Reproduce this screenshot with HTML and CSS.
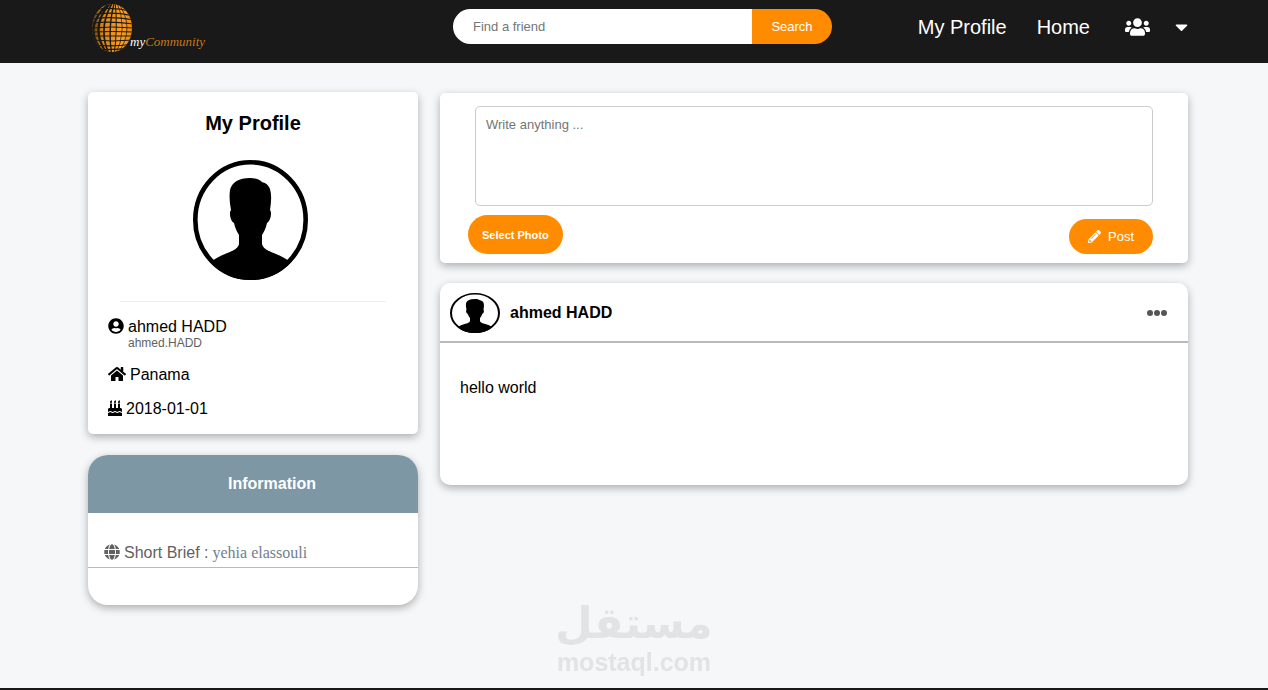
FILE: index.html
```html
<!DOCTYPE html>
<html lang="en">
<head>
    <meta charset="UTF-8">
    <meta name="viewport" content="width=device-width, initial-scale=1.0">
    <title>myCommunity</title>
    <link rel="stylesheet" href="styles.css">
</head>
<body>
    <!-- shared avatar picture -->
    <svg class="sprite" aria-hidden="true">
        <symbol id="avatar" viewBox="0 0 115 120" preserveAspectRatio="none">
            <clipPath id="avatar-clip"><ellipse cx="57.5" cy="60" rx="57" ry="60"/></clipPath>
            <ellipse cx="57.5" cy="60" rx="55.2" ry="57.7" fill="#fff" stroke="#000" stroke-width="4.6"/>
            <path clip-path="url(#avatar-clip)" d="M57 18C46 18 39 22 37 30C36 37 37 44 38 50C36 52 37 61 41 63C42 68 44 72 46 75V84C45 90 36 92 32 94C27 96 23 98 19 101V120H96V101C92 98 88 96 83 94C79 92 70 90 69 84V75C71 72 73 68 74 63C78 61 79 52 77 50C78 43 79 36 77 29C75 24 72 23 69 22C66 19 62 18 57 18Z"/>
        </symbol>
    </svg>

    <header class="navbar">
        <a class="logo" href="#" aria-label="myCommunity">
            <svg class="logo-globe" viewBox="0 0 42 50">
                <defs>
                    <linearGradient id="globe-fill" x1="0" y1="0" x2="1" y2="0">
                        <stop offset="0" stop-color="#5a3a10"/>
                        <stop offset="0.25" stop-color="#d98418"/>
                        <stop offset="0.7" stop-color="#ff9e24"/>
                        <stop offset="1" stop-color="#e8860c"/>
                    </linearGradient>
                    <clipPath id="globe-clip"><ellipse cx="20" cy="25" rx="20" ry="24"/></clipPath>
                </defs>
                <g clip-path="url(#globe-clip)">
                    <rect width="42" height="50" fill="url(#globe-fill)"/>
                    <g fill="none" stroke="#191919">
                        <path stroke-width="2.2" d="M21 -3Q-15 25 15 53M21 -3Q-6 25 17 53"/>
                        <path stroke-width="1.7" d="M22 -3Q4 25 18 53"/>
                        <path stroke-width="1.4" d="M23 -3Q15 25 20 53"/>
                        <path stroke-width="1" d="M23 -3Q26 25 22 53"/>
                        <path stroke-width="0.7" d="M24 -3Q37 25 23 53M24 -3Q46 25 24 53"/>
                        <path stroke-width="1.2" d="M0 7Q20 3 42 9M0 12Q20 8 42 13M0 16Q20 13 42 17M0 20Q20 18 42 21"/>
                        <path stroke-width="1" d="M0 25Q20 23 42 25M0 29Q20 28 42 29M0 33Q20 33 42 33M0 37Q20 39 42 37"/>
                        <path stroke-width="1.2" d="M0 42Q20 44 42 41M0 46Q20 48 42 44"/>
                    </g>
                </g>
            </svg>
            <span class="logo-text">my<span>Community</span></span>
        </a>

        <form class="search">
            <input type="text" placeholder="Find a friend" aria-label="Find a friend">
            <button type="button">Search</button>
        </form>

        <nav class="menu">
            <a href="#">My Profile</a>
            <a href="#">Home</a>
            <button class="icon-button friends" type="button" aria-label="Friends">
                <svg width="25" height="20" viewBox="0 0 640 512"><path d="M96 224c35.3 0 64-28.7 64-64s-28.7-64-64-64-64 28.7-64 64 28.7 64 64 64zm448 0c35.3 0 64-28.7 64-64s-28.7-64-64-64-64 28.7-64 64 28.7 64 64 64zm32 32h-64c-17.6 0-33.5 7.1-45.1 18.6 40.3 22.1 68.9 62 75.1 109.4h66c17.7 0 32-14.3 32-32v-32c0-35.3-28.7-64-64-64zm-256 0c61.9 0 112-50.1 112-112S381.9 32 320 32 208 82.1 208 144s50.1 112 112 112zm76.8 32h-8.3c-20.8 10-43.9 16-68.5 16s-47.6-6-68.5-16h-8.3C179.6 288 128 339.6 128 403.2V432c0 26.5 21.5 48 48 48h288c26.5 0 48-21.5 48-48v-28.8c0-63.6-51.6-115.2-115.2-115.2zm-223.7-13.4C161.5 263.1 145.6 256 128 256H64c-35.3 0-64 28.7-64 64v32c0 17.7 14.3 32 32 32h65.9c6.3-47.4 34.9-87.3 75.2-109.4z"/></svg>
            </button>
            <button class="icon-button" type="button" aria-label="Open menu">
                <svg width="13" height="20" viewBox="0 0 320 512"><path d="M31.3 192h257.3c17.8 0 26.7 21.5 14.1 34.1L174.1 354.8c-7.8 7.8-20.5 7.8-28.3 0L17.2 226.1C4.6 213.5 13.5 192 31.3 192z"/></svg>
            </button>
        </nav>
    </header>

    <main class="page">
        <aside class="sidebar">
            <section class="card profile">
                <h1>My Profile</h1>
                <svg class="profile-photo" role="img" aria-label="ahmed HADD"><use href="#avatar"/></svg>
                <hr>
                <ul class="details">
                    <li>
                        <svg width="16" height="16" viewBox="0 0 496 512"><path d="M248 8C111 8 0 119 0 256s111 248 248 248 248-111 248-248S385 8 248 8zm0 96c48.6 0 88 39.4 88 88s-39.4 88-88 88-88-39.4-88-88 39.4-88 88-88zm0 344c-58.7 0-111.3-26.6-146.5-68.2 18.8-35.4 55.6-59.8 98.5-59.8 2.4 0 4.8.4 7.1 1.1 13 4.2 26.6 6.9 40.9 6.9 14.3 0 28-2.7 40.9-6.9 2.3-.7 4.7-1.1 7.1-1.1 42.9 0 79.7 24.4 98.5 59.8C359.3 421.4 306.7 448 248 448z"/></svg>
                        <div>
                            ahmed HADD
                            <small>ahmed.HADD</small>
                        </div>
                    </li>
                    <li>
                        <svg width="18" height="16" viewBox="0 0 576 512"><path d="M280.37 148.26L96 300.11V464a16 16 0 0 0 16 16l112.06-.29a16 16 0 0 0 15.92-16V368a16 16 0 0 1 16-16h64a16 16 0 0 1 16 16v95.64a16 16 0 0 0 16 16.05L464 480a16 16 0 0 0 16-16V300L295.67 148.26a12.19 12.19 0 0 0-15.3 0zM571.6 251.47L488 182.56V44.05a12 12 0 0 0-12-12h-56a12 12 0 0 0-12 12v72.61L318.47 43a48 48 0 0 0-61 0L4.34 251.47a12 12 0 0 0-1.6 16.9l25.5 31A12 12 0 0 0 45.15 301l235.22-193.74a12.19 12.19 0 0 1 15.3 0L530.9 301a12 12 0 0 0 16.9-1.6l25.5-31a12 12 0 0 0-1.7-16.93z"/></svg>
                        Panama
                    </li>
                    <li>
                        <svg width="14" height="16" viewBox="0 0 448 512"><path d="M448 384c-28.02 0-31.26-32-74.5-32-43.43 0-46.825 32-74.75 32-27.695 0-31.454-32-74.75-32-42.842 0-47.218 32-74.5 32-28.148 0-31.202-32-74.75-32-43.547 0-46.653 32-74.75 32v-80c0-26.5 21.5-48 48-48h16V112h64v144h64V112h64v144h64V112h64v144h16c26.5 0 48 21.5 48 48v80zm0 128H0v-96c43.356 0 46.767-32 74.75-32 27.951 0 31.253 32 74.75 32 42.843 0 47.217-32 74.5-32 28.148 0 31.201 32 74.75 32 43.357 0 46.767-32 74.75-32 27.488 0 31.252 32 74.5 32v96zM96 96c-17.75 0-32-14.25-32-32 0-31 32-23 32-64 12 0 32 29.5 32 56s-14.25 40-32 40zm128 0c-17.75 0-32-14.25-32-32 0-31 32-23 32-64 12 0 32 29.5 32 56s-14.25 40-32 40zm128 0c-17.75 0-32-14.25-32-32 0-31 32-23 32-64 12 0 32 29.5 32 56s-14.25 40-32 40z"/></svg>
                        2018-01-01
                    </li>
                </ul>
            </section>

            <section class="card info">
                <h2>Information</h2>
                <p>
                    <svg width="16" height="16" viewBox="0 0 496 512"><path d="M336.5 160C322 70.7 287.8 8 248 8s-74 62.7-88.5 152h177zM152 256c0 22.2 1.2 43.5 3.3 64h185.3c2.1-20.5 3.3-41.8 3.3-64s-1.2-43.5-3.3-64H155.3c-2.1 20.5-3.3 41.8-3.3 64zm324.7-96c-28.6-67.9-86.5-120.4-158-141.6 24.4 33.8 41.2 84.7 50 141.6h108zM177.2 18.4C105.8 39.6 47.8 92.1 19.3 160h108c8.7-56.9 25.5-107.8 49.9-141.6zM487.4 192H372.7c2.1 21 3.3 42.5 3.3 64s-1.2 43-3.3 64h114.6c5.5-20.5 8.6-41.8 8.6-64s-3.1-43.5-8.5-64zM120 256c0-21.5 1.2-43 3.3-64H8.6C3.2 212.5 0 233.8 0 256s3.2 43.5 8.6 64h114.6c-2-21-3.2-42.5-3.2-64zm39.5 96c14.5 89.3 48.7 152 88.5 152s74-62.7 88.5-152h-177zm159.3 141.6c71.4-21.2 129.4-73.7 158-141.6h-108c-8.8 56.9-25.6 107.8-50 141.6zM19.3 352c28.6 67.9 86.5 120.4 158 141.6-24.4-33.8-41.2-84.7-50-141.6h-108z"/></svg>
                    Short Brief :
                    <span>yehia elassouli</span>
                </p>
            </section>
        </aside>

        <div class="feed">
            <form class="card composer">
                <textarea placeholder="Write anything ..." aria-label="Write anything"></textarea>
                <div class="composer-actions">
                    <button class="select-photo" type="button">Select Photo</button>
                    <button class="send-post" type="button">
                        <svg width="13" height="13" viewBox="0 0 512 512"><path d="M497.9 142.1l-46.1 46.1c-4.7 4.7-12.3 4.7-17 0l-111-111c-4.7-4.7-4.7-12.3 0-17l46.1-46.1c18.7-18.7 49.1-18.7 67.9 0l60.1 60.1c18.8 18.7 18.8 49.1 0 67.9zM284.2 99.8L21.6 362.4.4 483.9c-2.9 16.4 11.4 30.6 27.8 27.8l121.5-21.3 262.6-262.6c4.7-4.7 4.7-12.3 0-17l-111-111c-4.8-4.7-12.4-4.7-17.1 0zM124.1 339.9c-5.5-5.5-5.5-14.3 0-19.8l154-154c5.5-5.5 14.3-5.5 19.8 0s5.5 14.3 0 19.8l-154 154c-5.5 5.5-14.3 5.5-19.8 0zM88 424h48v36.3l-64.5 11.3-31.1-31.1L51.7 376H88v48z"/></svg>
                        Post
                    </button>
                </div>
            </form>

            <article class="card post">
                <header>
                    <svg class="post-photo" role="img" aria-label="ahmed HADD"><use href="#avatar"/></svg>
                    <h3>ahmed HADD</h3>
                    <button class="icon-button more" type="button" aria-label="More">
                        <svg width="20" height="6" viewBox="0 0 20 6"><circle cx="3" cy="3" r="3"/><circle cx="10" cy="3" r="3"/><circle cx="17" cy="3" r="3"/></svg>
                    </button>
                </header>
                <p>hello world</p>
            </article>
        </div>
    </main>

    <div class="watermark">
        <span class="watermark-ar" lang="ar">مستقل</span>
        <span>mostaql.com</span>
    </div>
</body>
</html>
```
FILE: styles.css
```css
* {
    box-sizing: border-box;
}

body {
    margin: 0;
    min-height: 100vh;
    border-bottom: 2px solid #191919;
    background-color: #f5f7f9;
    font-family: "Liberation Sans", Arial, sans-serif;
    font-size: 16px;
    line-height: 18px;
    color: #000;
}

h1, h2, h3, p, ul {
    margin: 0;
    padding: 0;
}

button {
    border: none;
    cursor: pointer;
    font-family: inherit;
}

input, textarea {
    font-family: inherit;
    font-size: 13px;
}

input::placeholder, textarea::placeholder {
    color: #757575;
}

svg {
    flex: none;
    fill: currentColor;
}

.sprite {
    position: absolute;
    width: 0;
    height: 0;
}

/* Header */
.navbar {
    display: grid;
    grid-template-columns: 330px minmax(200px, 392px) 1fr;
    column-gap: 22px;
    align-items: center;
    min-height: 63px;
    padding: 0 80px 10px 88px;
    background-color: #191919;
}

.logo {
    display: flex;
    align-items: flex-end;
    padding: 3px 0 0 4px;
    text-decoration: none;
}

.logo-globe {
    width: 42px;
    height: 50px;
}

.logo-text {
    margin-left: -4px;
    padding-bottom: 2px;
    font-family: "Liberation Serif", serif;
    font-size: 13px;
    font-style: italic;
    color: #fff;
}

.logo-text span {
    color: #c9761a;
}

.search {
    display: flex;
    height: 35px;
    margin-left: 13px;
}

.search input {
    flex: 1;
    min-width: 0;
    padding: 0 20px;
    border: none;
    border-radius: 20px 0 0 20px;
    background-color: #fff;
}

.search button {
    width: 80px;
    border-radius: 0 20px 20px 0;
    background-color: #ff8c00;
    color: #fff;
    font-size: 13px;
}

.menu {
    display: flex;
    justify-content: flex-end;
    align-items: center;
    font-size: 20px;
}

.menu a {
    margin-right: 30px;
    color: #fff;
    text-decoration: none;
}

.icon-button {
    display: flex;
    padding: 0;
    background: none;
    color: #fff;
}

.friends {
    margin: 0 25px 0 5px;
}

/* Page */
.page {
    display: grid;
    grid-template-columns: 330px 1fr;
    column-gap: 22px;
    align-items: start;
    padding: 29px 80px 29px 88px;
}

.sidebar, .feed {
    display: flex;
    flex-direction: column;
}

.sidebar {
    gap: 21px;
}

.feed {
    gap: 20px;
    padding-top: 1px;
}

.card {
    border-radius: 5px;
    background-color: #fff;
    box-shadow: 0 3px 8px rgba(0, 0, 0, 0.3);
}

/* Profile */
.profile {
    padding: 20px 20px 16px;
}

.profile h1 {
    font-size: 20px;
    line-height: 22px;
    text-align: center;
}

.profile-photo {
    display: block;
    width: 115px;
    height: 120px;
    margin: 26px 85px 21px;
}

.profile hr {
    height: 1px;
    margin: 0 12px 16px;
    border: none;
    background-color: #eee;
}

.details {
    display: flex;
    flex-direction: column;
    gap: 16px;
    list-style: none;
}

.details li {
    display: flex;
    gap: 4px;
}

.details small {
    display: block;
    font-size: 12px;
    line-height: 14px;
    color: #616161;
}

/* Information */
.info {
    overflow: hidden;
    padding-bottom: 37px;
    border-radius: 20px;
}

.info h2 {
    padding: 20px 0 20px 38px;
    background-color: #7d97a5;
    color: #fff;
    font-size: 16px;
    text-align: center;
}

.info p {
    display: flex;
    gap: 4px;
    padding: 31px 16px 5px;
    border-bottom: 1px solid #b9b9b9;
    color: #616161;
}

.info p span {
    font-family: "Liberation Serif", serif;
    color: #708090;
}

/* New post */
.composer {
    padding: 13px 35px 9px 28px;
}

.composer textarea {
    display: block;
    width: calc(100% - 7px);
    height: 100px;
    margin-left: 7px;
    padding: 10px;
    border: 1px solid #ccc;
    border-radius: 5px;
    resize: none;
}

.composer-actions {
    display: flex;
    justify-content: space-between;
    align-items: flex-end;
    margin-top: 9px;
}

.composer-actions button {
    border-radius: 20px;
    background-color: #ff8c00;
    color: #fff;
}

.select-photo {
    height: 39px;
    padding: 0 14px;
    font-size: 11px;
    font-weight: bold;
}

.send-post {
    display: flex;
    align-items: center;
    gap: 7px;
    height: 35px;
    padding: 0 19px;
    font-size: 13px;
}

/* Post */
.post {
    min-height: 202px;
    border-radius: 10px;
}

.post header {
    display: flex;
    align-items: center;
    gap: 10px;
    padding: 10px 21px 8px 10px;
    border-bottom: 2px solid #b9b9b9;
}

.post-photo {
    width: 50px;
    height: 40px;
}

.post h3 {
    font-size: 16px;
}

.more {
    margin-left: auto;
    color: #555;
}

.post p {
    padding: 36px 20px;
}

/* Watermark */
.watermark {
    position: fixed;
    right: 0;
    bottom: 14px;
    left: 0;
    display: flex;
    flex-direction: column;
    align-items: center;
    font-size: 25px;
    font-weight: bold;
    line-height: 28px;
    color: #e1e3e5;
    pointer-events: none;
}

.watermark-ar {
    font-family: "DejaVu Sans", sans-serif;
    font-size: 43px;
    line-height: 50px;
}
```
